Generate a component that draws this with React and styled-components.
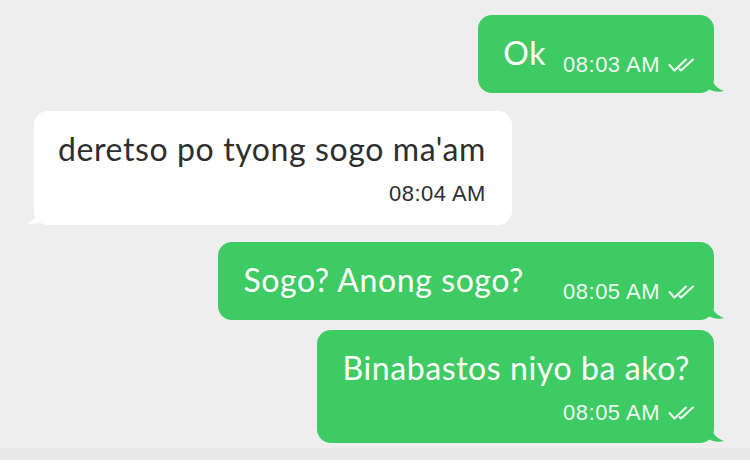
import React from 'react';
import styled, { createGlobalStyle } from 'styled-components';

const GlobalStyle = createGlobalStyle`
  html, body {
    margin: 0;
    padding: 0;
    background: #ffffff;
  }
  * { box-sizing: border-box; }
`;

const Screen = styled.div`
  width: 750px;
  height: 470px;
  display: flex;
  flex-direction: column;
  overflow: hidden;
`;

const Chat = styled.div`
  height: 448px;
  background: #efeeef;
  padding: 15px 36px 0 34px;
  display: flex;
  flex-direction: column;
`;

const Footer = styled.div`
  height: 12px;
  background: #e8e8e9;
`;

const Bubble = styled.div`
  position: relative;
  align-self: ${(p) => (p.$out ? 'flex-end' : 'flex-start')};
  margin-top: ${(p) => p.$gap || 0}px;
  background: ${(p) => (p.$out ? '#3fcb63' : '#ffffff')};
  color: ${(p) => (p.$out ? '#ffffff' : '#2e2e2e')};
  border-radius: 14px;
  padding: 18px ${(p) => (p.$out ? 14 : 26)}px 0 ${(p) => (p.$out ? 25 : 24)}px;
  height: ${(p) => p.$h}px;
  display: flex;
  flex-direction: ${(p) => (p.$stacked ? 'column' : 'row')};
  align-items: ${(p) => (p.$stacked ? 'flex-end' : 'flex-start')};
`;

const Text = styled.span`
  font-family: Lato, 'Noto Sans', sans-serif;
  font-size: 32px;
  line-height: 40px;
  letter-spacing: 0.6px;
  white-space: nowrap;
  margin-right: ${(p) => (p.$stacked && p.$out ? 10 : 0)}px;
`;

const Meta = styled.span`
  display: flex;
  align-items: center;
  gap: 8px;
  margin-left: ${(p) => p.$space || 0}px;
  margin-top: ${(p) => (p.$stacked ? 12 : 19)}px;
  font-family: 'Liberation Sans', Arial, sans-serif;
  font-size: 22px;
  line-height: 26px;
  letter-spacing: 0.5px;
  color: ${(p) => (p.$out ? '#eefaf1' : '#2e2e2e')};
`;

const Tail = styled.svg`
  position: absolute;
  bottom: 0;
  ${(p) => (p.$out ? 'right: -11px;' : 'left: -8px;')}
`;

const Checks = () => (
  <svg width="32" height="16" viewBox="0 0 32 16" fill="none" stroke="#eefaf1" strokeWidth="2.1" strokeLinecap="round" strokeLinejoin="round">
    <path d="M1.5 8 L6.5 13.5 L18 2.5" />
    <path d="M11.5 12 L13 13.5 L25 2.5" />
  </svg>
);

const BubbleTail = ({ out }) =>
  out ? (
    <Tail $out width="22" height="20" viewBox="0 0 22 20">
      <path d="M0 0 L8 0 C8 8 11 14 21 18 C15 20 8 18 4 15 C2 17 0 18 0 18 Z" fill="#3fcb63" />
    </Tail>
  ) : (
    <Tail width="22" height="20" viewBox="0 0 22 20">
      <path d="M22 0 L14 0 C14 8 11 14 1 18 C7 20 14 18 18 15 C20 17 22 18 22 18 Z" fill="#ffffff" />
    </Tail>
  );

const messages = [
  { out: true, text: 'Ok', time: '08:03 AM', h: 78, gap: 0, space: 17 },
  { out: false, text: "deretso po tyong sogo ma'am", time: '08:04 AM', h: 114, gap: 18, stacked: true },
  { out: true, text: 'Sogo? Anong sogo?', time: '08:05 AM', h: 78, gap: 17, space: 39 },
  { out: true, text: 'Binabastos niyo ba ako?', time: '08:05 AM', h: 113, gap: 10, stacked: true },
];

export default function App() {
  return (
    <>
      <GlobalStyle />
      <Screen>
        <Chat>
          {messages.map((m, i) => (
            <Bubble key={i} $out={m.out} $gap={m.gap} $h={m.h} $stacked={m.stacked}>
              <Text $out={m.out} $stacked={m.stacked}>{m.text}</Text>
              <Meta $out={m.out} $stacked={m.stacked} $space={m.space}>
                {m.time}
                {m.out && <Checks />}
              </Meta>
              <BubbleTail out={m.out} />
            </Bubble>
          ))}
        </Chat>
        <Footer />
      </Screen>
    </>
  );
}
